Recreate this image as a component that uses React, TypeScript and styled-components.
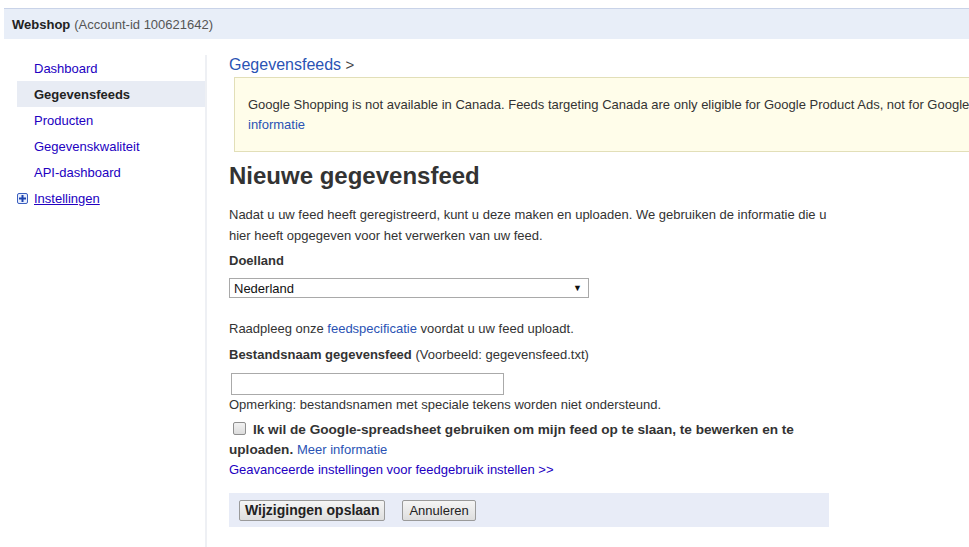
import React from "react";
import styled, { createGlobalStyle } from "styled-components";

const Global = createGlobalStyle`
  html, body { margin: 0; padding: 0; background: #fff; overflow: hidden; }
  body { font-family: "Liberation Sans", Arial, sans-serif; font-size: 13px; color: #333; }
`;

const Page = styled.div`
  padding-top: 8px;
  width: 969px;
  height: 547px;
  box-sizing: border-box;
  overflow: hidden;
`;

const TopBar = styled.div`
  margin-left: 4px;
  height: 30px;
  border-top: 1px solid #c9d3e8;
  background: #e8eef8;
  display: flex;
  align-items: center;
  padding-left: 8px;
  font-size: 13px;
  color: #555;
  b { color: #222; margin-right: 4px; }
`;

const Body = styled.div`
  display: flex;
  margin-top: 16px;
`;

const Sidebar = styled.nav`
  width: 188px;
  flex: none;
  margin-left: 17px;
  border-right: 2px solid #eef0f4;
  height: 500px;
  display: flex;
  flex-direction: column;
`;

const NavItem = styled.a<{ $active?: boolean }>`
  display: flex;
  align-items: center;
  height: 26px;
  padding-left: 17px;
  font-size: 13px;
  text-decoration: none;
  color: ${(p) => (p.$active ? "#222" : "#2200c1")};
  font-weight: ${(p) => (p.$active ? "bold" : "normal")};
  background: ${(p) => (p.$active ? "#e8ecf4" : "transparent")};
`;

const PlusItem = styled.a`
  display: flex;
  align-items: center;
  height: 26px;
  font-size: 13px;
  color: #2200c1;
  text-decoration: underline;
  gap: 6px;
`;

const Main = styled.main`
  margin-left: 22px;
  flex: 1;
  min-width: 0;
`;

const Crumb = styled.a`
  display: block;
  font-size: 16px;
  color: #2a53b4;
  height: 20px;
  line-height: 20px;
  text-decoration: none;
  span { color: #444; font-size: 15px; }
`;

const Notice = styled.div`
  margin-left: 5px;
  margin-top: 2px;
  width: 735px;
  height: 75px;
  box-sizing: border-box;
  background: #fffdea;
  border: 1px solid #e2dfb8;
  border-right: none;
  padding: 17px 0 0 13px;
  line-height: 20px;
  color: #333;
  overflow: hidden;
  a { color: #2a53b4; text-decoration: none; }
`;

const NoticeLine = styled.div`
  white-space: nowrap;
  overflow: hidden;
`;

const Title = styled.h1`
  margin: 10px 0 0 0;
  font-size: 24px;
  line-height: 28px;
  font-weight: bold;
  color: #333;
`;

const Para = styled.p`
  margin: 14px 0 0 0;
  width: 600px;
  line-height: 21px;
  color: #333;
`;

const Label = styled.div<{ $top?: number }>`
  margin-top: ${(p) => p.$top ?? 8}px;
  line-height: 20px;
  color: #333;
  b { color: #333; }
  a { color: #2a53b4; text-decoration: none; }
`;

const Select = styled.div`
  margin-top: 7px;
  width: 360px;
  height: 20px;
  box-sizing: border-box;
  border: 1px solid #a9a9a9;
  display: flex;
  align-items: center;
  justify-content: space-between;
  padding: 0 6px 0 4px;
  color: #111;
`;

const Arrow = styled.span`
  font-size: 9px;
  color: #111;
`;

const TextInput = styled.div`
  margin: 8px 0 0 2px;
  width: 273px;
  height: 22px;
  box-sizing: border-box;
  border: 1px solid #aaa;
`;

const CheckRow = styled.div`
  margin-top: 5px;
  width: 590px;
  line-height: 20px;
  font-size: 13.6px;
  font-weight: bold;
  color: #333;
`;

const InlineLink = styled.a`
  font-weight: normal;
  font-size: 13px;
  line-height: 20px;
  color: #2a53b4;
  text-decoration: none;
`;

const Box = styled.span`
  display: inline-block;
  width: 11px;
  height: 11px;
  border: 1px solid #8f8f8f;
  border-radius: 2px;
  background: linear-gradient(#f2f2f2, #dcdcdc);
  margin: 0 7px 0 4px;
  vertical-align: -1px;
`;

const Advanced = styled.a`
  display: block;
  line-height: 20px;
  color: #2200c1;
  text-decoration: none;
`;

const ButtonBar = styled.div`
  margin-top: 13px;
  width: 600px;
  height: 34px;
  background: #e8ecf7;
  display: flex;
  align-items: center;
  padding-left: 10px;
  box-sizing: border-box;
  gap: 17px;
`;

const Button = styled.button<{ $primary?: boolean }>`
  height: 21px;
  padding: 0 ${(p) => (p.$primary ? 5 : 6)}px;
  font-family: "Liberation Sans", Arial, sans-serif;
  font-size: ${(p) => (p.$primary ? 14 : 13)}px;
  font-weight: ${(p) => (p.$primary ? "bold" : "normal")};
  color: #222;
  border: 1px solid #9a9a9a;
  border-radius: 2px;
  background: linear-gradient(#f5f5f5, #dedede);
`;

const PlusIcon = () => (
  <svg width="11" height="11" viewBox="0 0 11 11">
    <rect x="0.5" y="0.5" width="10" height="10" rx="1.5" fill="#e8eefc" stroke="#3b5fbf" />
    <rect x="2" y="4.5" width="7" height="2" fill="#1d44b0" />
    <rect x="4.5" y="2" width="2" height="7" fill="#1d44b0" />
  </svg>
);

export default function App() {
  return (
    <Page>
      <Global />
      <TopBar>
        <b>Webshop</b> (Account-id 100621642)
      </TopBar>
      <Body>
        <Sidebar>
          <NavItem>Dashboard</NavItem>
          <NavItem $active>Gegevensfeeds</NavItem>
          <NavItem>Producten</NavItem>
          <NavItem>Gegevenskwaliteit</NavItem>
          <NavItem>API-dashboard</NavItem>
          <PlusItem>
            <PlusIcon />
            Instellingen
          </PlusItem>
        </Sidebar>
        <Main>
          <Crumb>
            Gegevensfeeds <span>&gt;</span>
          </Crumb>
          <Notice>
            <NoticeLine>
              Google Shopping is not available in Canada. Feeds targeting Canada are only eligible for Google Product Ads, not for Google Shopping. Meer
            </NoticeLine>
            <a>informatie</a>
          </Notice>
          <Title>Nieuwe gegevensfeed</Title>
          <Para>
            Nadat u uw feed heeft geregistreerd, kunt u deze maken en uploaden. We gebruiken de informatie die u hier heeft opgegeven voor het verwerken van uw feed.
          </Para>
          <Label $top={5}>
            <b>Doelland</b>
          </Label>
          <Select>
            <span>Nederland</span>
            <Arrow>▼</Arrow>
          </Select>
          <Label $top={21}>
            Raadpleeg onze <a>feedspecificatie</a> voordat u uw feed uploadt.
          </Label>
          <Label $top={6}>
            <b>Bestandsnaam gegevensfeed</b> (Voorbeeld: gegevensfeed.txt)
          </Label>
          <TextInput />
          <Label $top={0}>Opmerking: bestandsnamen met speciale tekens worden niet ondersteund.</Label>
          <CheckRow>
            <Box />
            Ik wil de Google-spreadsheet gebruiken om mijn feed op te slaan, te bewerken en te uploaden.{" "}
            <InlineLink>Meer informatie</InlineLink>
          </CheckRow>
          <Advanced>Geavanceerde instellingen voor feedgebruik instellen &gt;&gt;</Advanced>
          <ButtonBar>
            <Button $primary>Wijzigingen opslaan</Button>
            <Button>Annuleren</Button>
          </ButtonBar>
        </Main>
      </Body>
    </Page>
  );
}
